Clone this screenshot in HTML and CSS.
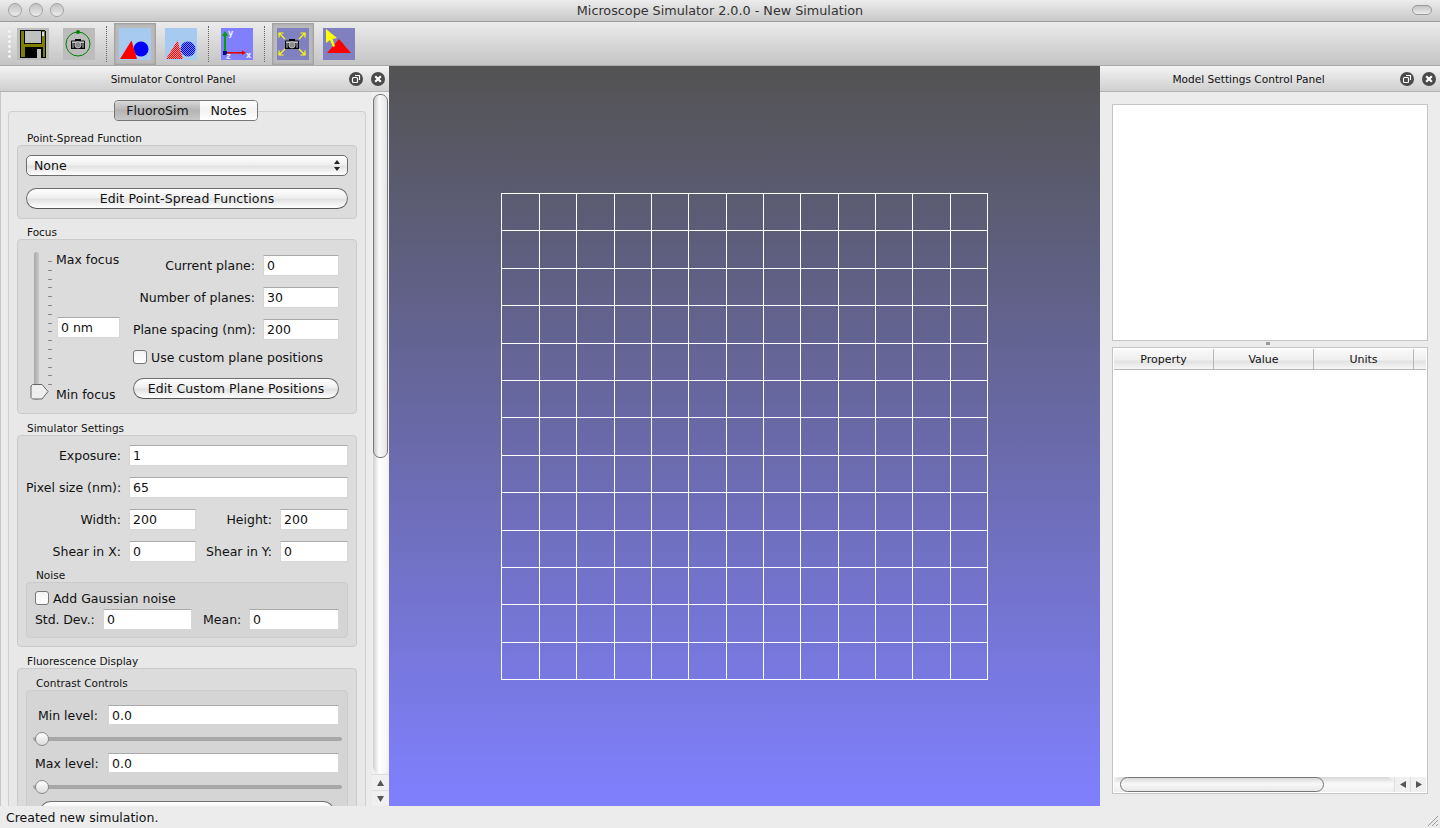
FILE: index.html
```html
<!DOCTYPE html>
<html lang="en">

<head>
    <meta charset="UTF-8">
    <title>Microscope Simulator 2.0.0 - New Simulation</title>
    <link rel="stylesheet" href="styles.css">
</head>

<body>
    <svg class="defs" width="0" height="0">
        <defs>
            <symbol id="camera" viewBox="0 0 14 10">
                <rect x="0" y="1.5" width="14" height="8.5" rx=".6" fill="#000"/>
                <rect x="4" y="0" width="6" height="2" fill="#000"/>
                <rect x="1" y="2.5" width="12" height="1.4" fill="#e4e4e4"/>
                <rect x="1" y="3.9" width="2" height="5" fill="#666"/>
                <rect x="11" y="3.9" width="2" height="5" fill="#666"/>
                <circle cx="7" cy="5.8" r="3.2" fill="#8c8c8c" stroke="#ddd" stroke-width=".7"/>
            </symbol>
        </defs>
    </svg>

    <div class="window">
        <div class="titlebar">
            <div class="lights">
                <span class="light"></span>
                <span class="light"></span>
                <span class="light"></span>
            </div>
            <div class="window-title">Microscope Simulator 2.0.0 - New Simulation</div>
            <span class="pill"></span>
        </div>

        <div class="toolbar">
            <div class="gripper"></div>

            <div class="tool tool-first">
                <svg width="32" height="32" viewBox="0 0 32 32" shape-rendering="crispEdges">
                    <rect width="32" height="32" fill="#bcbcbc"/>
                    <path d="M3 2H27L29 4V30H3Z" fill="#000"/>
                    <rect x="4" y="3" width="24" height="26" fill="#808000"/>
                    <rect x="7" y="3" width="18" height="13" fill="#000"/>
                    <rect x="8" y="3" width="16" height="12" fill="#c0c0c0"/>
                    <rect x="25" y="4" width="2" height="4" fill="#ddd"/>
                    <rect x="8" y="19" width="18" height="11" fill="#000"/>
                    <rect x="20" y="21" width="4" height="9" fill="#c0c0c0"/>
                </svg>
            </div>
            <div class="tool">
                <svg width="32" height="32" viewBox="0 0 32 32">
                    <rect width="32" height="32" fill="#bcbcbc"/>
                    <circle cx="15" cy="16" r="12" fill="none" stroke="#008000" stroke-width="1"/>
                    <circle cx="15" cy="4" r="2" fill="#008000"/>
                    <use href="#camera" x="8" y="11" width="14" height="10"/>
                </svg>
            </div>

            <div class="tool-sep tool-sep-a"></div>

            <div class="tool tool-on">
                <svg width="32" height="32" viewBox="0 0 32 32">
                    <rect width="32" height="32" fill="#a6caf0"/>
                    <circle cx="22" cy="21" r="7.5" fill="#00f"/>
                    <path d="M12.5 12.5L18 31H1Z" fill="#f00"/>
                </svg>
            </div>
            <div class="tool tool-plain">
                <svg width="32" height="32" viewBox="0 0 32 32">
                    <defs>
                        <clipPath id="clip-circle"><circle cx="23" cy="21" r="7.5"/></clipPath>
                        <clipPath id="clip-triangle"><path d="M12.5 12.5L18 31H1Z"/></clipPath>
                    </defs>
                    <rect width="32" height="32" fill="#a6caf0"/>
                    <circle cx="23" cy="21" r="7.5" fill="#7a90f0"/>
                    <g clip-path="url(#clip-circle)" stroke="#00f" stroke-width="1" stroke-dasharray="1 1" fill="none">
                        <path d="M0 13.5H32M0 15.5H32M0 17.5H32M0 19.5H32M0 21.5H32M0 23.5H32M0 25.5H32M0 27.5H32"/>
                        <path stroke-dashoffset="1" d="M0 14.5H32M0 16.5H32M0 18.5H32M0 20.5H32M0 22.5H32M0 24.5H32M0 26.5H32M0 28.5H32"/>
                    </g>
                    <path d="M12.5 12.5L18 31H1Z" fill="#f4a0a0"/>
                    <g clip-path="url(#clip-triangle)" stroke="#f00" stroke-width="1" stroke-dasharray="1 1" fill="none">
                        <path d="M0 12.5H32M0 14.5H32M0 16.5H32M0 18.5H32M0 20.5H32M0 22.5H32M0 24.5H32M0 26.5H32M0 28.5H32M0 30.5H32"/>
                        <path stroke-dashoffset="1" d="M0 13.5H32M0 15.5H32M0 17.5H32M0 19.5H32M0 21.5H32M0 23.5H32M0 25.5H32M0 27.5H32M0 29.5H32"/>
                    </g>
                </svg>
            </div>

            <div class="tool-sep tool-sep-b"></div>

            <div class="tool tool-plain">
                <svg width="32" height="32" viewBox="0 0 32 32">
                    <rect width="32" height="32" fill="#8080ff"/>
                    <rect x="3" y="6" width="2" height="19" fill="#00a000"/>
                    <path d="M4 3L7 8H1Z" fill="#00a000"/>
                    <rect x="5" y="24" width="18" height="1.6" fill="#e00000"/>
                    <path d="M25 24.8L21 22.6V27Z" fill="#e00000"/>
                    <rect x="2" y="23" width="4" height="4" fill="#000080"/>
                    <text x="7" y="8" class="axis-letter">y</text>
                    <text x="25" y="30" class="axis-letter">x</text>
                    <text x="5" y="31" class="axis-letter">z</text>
                </svg>
            </div>

            <div class="tool-sep tool-sep-c"></div>

            <div class="tool tool-on tool-on-b">
                <svg width="32" height="32" viewBox="0 0 32 32">
                    <rect width="32" height="32" fill="#8080c0"/>
                    <g stroke="#ff0" stroke-width="1.2" fill="none">
                        <path d="M2 5L8 11M2 9.5V5H6.5"/>
                        <path d="M28 5L22 11M28 9.5V5H23.5"/>
                        <path d="M2 27L8 21M2 22.5V27H6.5"/>
                        <path d="M28 27L22 21M28 22.5V27H23.5"/>
                    </g>
                    <use href="#camera" x="8" y="11" width="14" height="10"/>
                </svg>
            </div>
            <div class="tool tool-plain">
                <svg width="32" height="32" viewBox="0 0 32 32">
                    <rect width="32" height="32" fill="#8080c0"/>
                    <path d="M16 11L28 25H4Z" fill="#f00"/>
                    <path d="M3 1V15L7 12L10 19L12 18L9.5 11L14 10Z" fill="#ff0"/>
                </svg>
            </div>
        </div>

        <div class="main">
            <div class="side side-left">
                <div class="panel-head">
                    <span class="panel-title">Simulator Control Panel</span>
                    <span class="panel-btn">
                        <svg width="14" height="14" viewBox="0 0 14 14"><rect x="3.5" y="5.5" width="5" height="5" rx="1" fill="none" stroke="#fff" stroke-width="1.2"/><path d="M6 3.5H10.5V8" fill="none" stroke="#fff" stroke-width="1.2"/></svg>
                    </span>
                    <span class="panel-btn">
                        <svg width="14" height="14" viewBox="0 0 14 14"><path d="M4.2 4.2L9.8 9.8M9.8 4.2L4.2 9.8" stroke="#fff" stroke-width="2.2"/></svg>
                    </span>
                </div>
                <div class="left-body">
                    <div class="left-scroll">
                        <div class="tabs">
                            <span class="tab tab-active">FluoroSim</span>
                            <span class="tab">Notes</span>
                        </div>
                        <div class="tab-pane">

                            <div class="group-title">Point-Spread Function</div>
                            <div class="group group-psf">
                                <div class="select">
                                    <span>None</span>
                                    <svg width="8" height="13" viewBox="0 0 8 13"><path d="M4 1L7 5H1ZM4 12L1 8H7Z" fill="#222"/></svg>
                                </div>
                                <button class="btn">Edit Point-Spread Functions</button>
                            </div>

                            <div class="group-title">Focus</div>
                            <div class="group group-focus">
                                <div class="vslider">
                                    <div class="vtrack"></div>
                                    <div class="vticks"></div>
                                    <svg class="vthumb" width="20" height="18" viewBox="0 0 20 18"><path d="M2.5 1.5H12L18 8.5L12 16H2.5L1 14.5V3Z" fill="#eee" stroke="#666"/></svg>
                                </div>
                                <div class="focus-mid">
                                    <span>Max focus</span>
                                    <input class="field" type="text" value="0 nm">
                                    <span>Min focus</span>
                                </div>
                                <div class="focus-right">
                                    <div class="plane-grid">
                                        <label>Current plane:</label>
                                        <input class="field" type="text" value="0">
                                        <label>Number of planes:</label>
                                        <input class="field" type="text" value="30">
                                        <label class="tight">Plane spacing (nm):</label>
                                        <input class="field" type="text" value="200">
                                    </div>
                                    <div class="check-row">
                                        <span class="check"></span>
                                        <span>Use custom plane positions</span>
                                    </div>
                                    <button class="btn">Edit Custom Plane Positions</button>
                                </div>
                            </div>

                            <div class="group-title group-title-wide">Simulator Settings</div>
                            <div class="group group-sim">
                                <div class="sim-grid">
                                    <label>Exposure:</label>
                                    <input class="field span-3" type="text" value="1">
                                    <label>Pixel size (nm):</label>
                                    <input class="field span-3" type="text" value="65">
                                    <label>Width:</label>
                                    <input class="field" type="text" value="200">
                                    <label>Height:</label>
                                    <input class="field" type="text" value="200">
                                    <label>Shear in X:</label>
                                    <input class="field" type="text" value="0">
                                    <label>Shear in Y:</label>
                                    <input class="field" type="text" value="0">
                                </div>
                                <div class="group-title group-title-inner">Noise</div>
                                <div class="group group-noise">
                                    <div class="check-row check-row-noise">
                                        <span class="check"></span>
                                        <span>Add Gaussian noise</span>
                                    </div>
                                    <div class="noise-row">
                                        <label class="std-label">Std. Dev.:</label>
                                        <input class="field" type="text" value="0">
                                        <label class="mean-label">Mean:</label>
                                        <input class="field" type="text" value="0">
                                    </div>
                                </div>
                            </div>

                            <div class="group-title group-title-wide">Fluorescence Display</div>
                            <div class="group group-display">
                                <div class="group-title group-title-inner">Contrast Controls</div>
                                <div class="group group-contrast">
                                    <div class="level-row">
                                        <label>Min level:</label>
                                        <input class="field" type="text" value="0.0">
                                    </div>
                                    <div class="hslider"><span class="hthumb"></span></div>
                                    <div class="level-row">
                                        <label>Max level:</label>
                                        <input class="field" type="text" value="0.0">
                                    </div>
                                    <div class="hslider"><span class="hthumb"></span></div>
                                    <div class="btn btn-cut"></div>
                                </div>
                            </div>

                        </div>
                    </div>
                    <div class="vscroll">
                        <div class="vscroll-track">
                            <div class="vscroll-thumb"></div>
                        </div>
                        <div class="vscroll-arrow"><svg width="9" height="8" viewBox="0 0 9 8"><path d="M4.5 1L8 7H1Z" fill="#555"/></svg></div>
                        <div class="vscroll-arrow"><svg width="9" height="8" viewBox="0 0 9 8"><path d="M4.5 7L1 1H8Z" fill="#555"/></svg></div>
                    </div>
                </div>
            </div>

            <div class="viewport">
                <svg class="mesh" width="487" height="487" viewBox="0 0 487 487" shape-rendering="crispEdges">
                    <path stroke="#fff" stroke-width="1" fill="none" d="M.5 0V487M38.5 0V487M75.5 0V487M113.5 0V487M150.5 0V487M187.5 0V487M225.5 0V487M262.5 0V487M299.5 0V487M337.5 0V487M374.5 0V487M411.5 0V487M449.5 0V487M486.5 0V487M0 .5H487M0 37.5H487M0 75.5H487M0 112.5H487M0 150.5H487M0 187.5H487M0 224.5H487M0 262.5H487M0 299.5H487M0 337.5H487M0 374.5H487M0 411.5H487M0 449.5H487M0 486.5H487"/>
                </svg>
            </div>

            <div class="side side-right">
                <div class="panel-head">
                    <span class="panel-title">Model Settings Control Panel</span>
                    <span class="panel-btn">
                        <svg width="14" height="14" viewBox="0 0 14 14"><rect x="3.5" y="5.5" width="5" height="5" rx="1" fill="none" stroke="#fff" stroke-width="1.2"/><path d="M6 3.5H10.5V8" fill="none" stroke="#fff" stroke-width="1.2"/></svg>
                    </span>
                    <span class="panel-btn">
                        <svg width="14" height="14" viewBox="0 0 14 14"><path d="M4.2 4.2L9.8 9.8M9.8 4.2L4.2 9.8" stroke="#fff" stroke-width="2.2"/></svg>
                    </span>
                </div>
                <div class="right-body">
                    <div class="tree-box"></div>
                    <div class="splitter"><span class="splitter-grip"></span></div>
                    <div class="table-box">
                        <div class="table-head">
                            <span class="th">Property</span>
                            <span class="th">Value</span>
                            <span class="th">Units</span>
                            <span class="th th-rest"></span>
                        </div>
                        <div class="table-rows"></div>
                        <div class="hscroll">
                            <div class="hscroll-track"><div class="hscroll-thumb"></div></div>
                            <div class="hscroll-arrow"><svg width="8" height="9" viewBox="0 0 8 9"><path d="M1 4.5L7 1V8Z" fill="#555"/></svg></div>
                            <div class="hscroll-arrow"><svg width="8" height="9" viewBox="0 0 8 9"><path d="M7 4.5L1 8V1Z" fill="#555"/></svg></div>
                        </div>
                    </div>
                </div>
            </div>
        </div>

        <div class="statusbar">
            <span>Created new simulation.</span>
            <svg class="resizer" width="12" height="12" viewBox="0 0 12 12"><path d="M1 11L11 1M5 11L11 5M9 11L11 9" stroke="#999" stroke-width="1"/></svg>
        </div>
    </div>
</body>

</html>
```

FILE: styles.css
```css
* {
    box-sizing: border-box;
}

html,
body {
    margin: 0;
    height: 100%;
    overflow: hidden;
}

body {
    font-family: "DejaVu Sans", sans-serif;
    font-size: 12.5px;
    color: #111;
    background: #ececec;
}

.defs {
    display: block;
    height: 0;
}

.window {
    display: flex;
    flex-direction: column;
    width: 1440px;
    height: 828px;
}

/* Title bar */
.titlebar {
    display: flex;
    align-items: center;
    height: 22px;
    flex: none;
    padding: 0 8px 1px 8px;
    background: linear-gradient(#ececec, #c9c9c9);
    border-bottom: 1px solid #9c9c9c;
}

.lights {
    display: flex;
    gap: 7px;
    width: 62px;
}

.light {
    width: 14px;
    height: 14px;
    border-radius: 50%;
    border: 1px solid #a2a2a2;
    background: linear-gradient(#c2c2c2, #ececec);
}

.window-title {
    flex: 1;
    text-align: center;
    padding-right: 42px;
    font-size: 12.75px;
    color: #333;
}

.pill {
    width: 20px;
    height: 10px;
    border-radius: 5px;
    border: 1px solid #999;
    background: linear-gradient(#c4c4c4, #ececec);
}

/* Toolbar */
.toolbar {
    display: flex;
    align-items: center;
    height: 44px;
    flex: none;
    padding-left: 7px;
    background: linear-gradient(#ebebeb, #c4c4c4);
    border-bottom: 1px solid #aaa;
}

.gripper {
    width: 5px;
    height: 30px;
    background-image: radial-gradient(circle, #f4f4f4 1.2px, transparent 1.6px);
    background-size: 5px 5px;
}

.tool {
    display: flex;
    align-items: center;
    justify-content: center;
    width: 32px;
    height: 32px;
    flex: none;
}

.tool-first {
    margin-left: 5px;
    margin-right: 14px;
}

.tool-on {
    width: 42px;
    height: 42px;
    border: 1px solid #a3a3a3;
    background: #bababa;
    box-shadow: inset 0 0 2px #999;
}

.tool-plain {
    margin-left: 9px;
}

.tool-sep {
    width: 0;
    height: 36px;
    border-left: 1px dotted #666;
}

.tool-sep-a {
    margin: 0 7px 0 11px;
}

.tool-sep-b {
    margin: 0 12px 0 11px;
}

.tool-sep-b + .tool-plain {
    margin-left: 0;
}

.tool-sep-c {
    margin: 0 7px 0 11px;
}

.axis-letter {
    font-size: 8px;
    font-weight: bold;
    fill: #e8e8ff;
}

/* Main area */
.main {
    display: flex;
    flex: 1;
    min-height: 0;
}

.side {
    display: flex;
    flex-direction: column;
    flex: none;
    background: #ececec;
}

.side-left {
    width: 389px;
}

.side-right {
    width: 340px;
}

.panel-head {
    display: flex;
    align-items: center;
    gap: 8px;
    height: 26px;
    flex: none;
    padding: 0 4px 0 5px;
    background: linear-gradient(#f3f3f3, #cfcfcf);
    border-bottom: 1px solid #b4b4b4;
}

.panel-title {
    flex: 1;
    text-align: center;
    font-size: 10.6px;
    color: #111;
}

.panel-btn {
    display: flex;
    width: 14px;
    height: 14px;
    border-radius: 50%;
    background: #4a4a4a;
}

.left-body {
    display: flex;
    flex: 1;
    min-height: 0;
}

.left-scroll {
    width: 372px;
    flex: none;
    overflow: hidden;
    padding: 8px 6px 0 8px;
    box-shadow: inset 1px 0 #c8c8c8;
}

.tabs {
    position: relative;
    display: flex;
    width: 144px;
    height: 21px;
    margin-left: 106px;
    border: 1px solid #777;
    border-radius: 4px;
    overflow: hidden;
    font-size: 12.5px;
}

.tab {
    flex: 1;
    display: flex;
    align-items: center;
    justify-content: center;
    background: linear-gradient(#fdfdfd, #f2f2f2 50%, #ffffff);
}

.tab-active {
    flex: none;
    width: 85px;
    background: linear-gradient(#d8d8d8, #b4b4b4 50%, #c8c8c8);
}

.tab-pane {
    margin-top: -10px;
    padding: 19px 8px 0 8px;
    border: 1px solid #d0d0d0;
    border-bottom: 0;
    border-radius: 4px 4px 0 0;
    background: #e8e8e8;
}

.group-title {
    height: 14px;
    line-height: 14px;
    margin-top: 6px;
    padding-left: 10px;
    font-size: 10.5px;
    color: #111;
}

.tab-pane > .group-title:first-child {
    margin-top: 0;
}

.tab-pane > .group-title-wide {
    margin-top: 7px;
}

.group {
    border: 1px solid #cbcbcb;
    border-radius: 4px;
    background: #dcdcdc;
    padding: 9px 8px;
}

.group .group {
    background: #d5d5d5;
}

.group-title-inner {
    margin-top: 6px;
}

/* Controls */
.field {
    display: block;
    width: 100%;
    height: 21px;
    margin: 0;
    padding: 0 3px;
    border: 1px solid #d6d6d6;
    border-top-color: #aaa;
    border-radius: 0;
    outline: none;
    background: #fff;
    font: inherit;
    font-size: 12.5px;
    color: #111;
}

.btn {
    display: block;
    width: 100%;
    height: 21px;
    margin: 0;
    padding: 0;
    border: 1px solid #6e6e6e;
    border-bottom-color: #555;
    border-radius: 11px;
    background: linear-gradient(#ffffff, #efefef 45%, #e2e2e2 55%, #ffffff);
    font: inherit;
    letter-spacing: .12px;
    color: #111;
}

.select {
    display: flex;
    align-items: center;
    justify-content: space-between;
    height: 21px;
    padding: 0 6px 0 7px;
    border: 1px solid #6e6e6e;
    border-radius: 5px;
    background: linear-gradient(#ffffff, #efefef 45%, #e2e2e2 55%, #ffffff);
}

.group-psf .select {
    margin-bottom: 12px;
}

.check-row {
    display: flex;
    align-items: center;
    gap: 4px;
    height: 14px;
}

.check {
    flex: none;
    width: 14px;
    height: 14px;
    border: 1px solid #777;
    border-radius: 3px;
    background: linear-gradient(#f4f4f4, #ffffff);
}

/* Focus group */
.group-focus {
    display: flex;
    height: 175px;
    padding: 12px 8px 0 0;
}

.vslider {
    position: relative;
    display: flex;
    width: 38px;
    height: 148px;
    flex: none;
}

.vtrack {
    width: 5px;
    margin-left: 16px;
    height: 148px;
    border-radius: 3px;
    background: linear-gradient(90deg, #a9a9a9, #c9c9c9);
}

.vticks {
    width: 4px;
    height: 124px;
    margin: 9px 0 0 9px;
    background: repeating-linear-gradient(#888 0, #888 1px, transparent 1px, transparent 8.8px);
}

.vthumb {
    position: absolute;
    left: 12px;
    top: 131px;
}

.focus-mid {
    display: flex;
    flex-direction: column;
    justify-content: space-between;
    align-items: flex-start;
    width: 65px;
    height: 150px;
    flex: none;
}

.focus-mid .field {
    width: 63px;
    margin-left: 1px;
}

.focus-right {
    flex: none;
    width: 206px;
    margin: 3px 0 0 12px;
}

.plane-grid {
    display: grid;
    grid-template-columns: 122px 76px;
    column-gap: 8px;
    row-gap: 11px;
    align-items: center;
}

.plane-grid label,
.sim-grid label {
    text-align: right;
    white-space: nowrap;
}

.tight {
    letter-spacing: -.1px;
}

.focus-right .check-row {
    margin: 10px 0 14px 0;
}

/* Simulator settings */
.group-sim {
    padding-bottom: 8px;
}

.sim-grid {
    display: grid;
    grid-template-columns: 95px 67px 68px 68px;
    column-gap: 8px;
    row-gap: 11px;
    align-items: center;
}

.span-3 {
    grid-column: span 3;
}

.group-noise {
    height: 56px;
    padding: 8px 8px 0 8px;
}

.check-row-noise {
    height: 14px;
    margin-bottom: 4px;
}

.noise-row {
    display: flex;
    align-items: center;
}

.noise-row label {
    flex: none;
    white-space: nowrap;
}

.std-label {
    width: 60px;
    letter-spacing: -.1px;
}

.mean-label {
    width: 36px;
    margin-left: 11px;
}

.noise-row .field:nth-child(2) {
    width: 89px;
    margin-left: 8px;
}

.noise-row .field:nth-child(4) {
    width: 90px;
    margin-left: 10px;
}

/* Contrast */
.group-display {
    padding-top: 7px;
    height: 160px;
}

.group-display .group-title-inner {
    margin-top: 0;
}

.group-contrast {
    height: 140px;
    padding-top: 14px;
}

.level-row {
    display: grid;
    grid-template-columns: 63px 1fr;
    column-gap: 10px;
    align-items: center;
}

.level-row label {
    text-align: right;
    white-space: nowrap;
}

.level-row .field {
    height: 20px;
}

.hslider {
    position: relative;
    height: 4px;
    margin: 12px -3px 12px -2px;
    border-radius: 2px;
    background: #a8a8a8;
}

.hthumb {
    position: absolute;
    left: 2px;
    top: -5px;
    width: 14px;
    height: 14px;
    border-radius: 50%;
    border: 1px solid #888;
    background: linear-gradient(#fff, #ddd);
}

.btn-cut {
    width: 294px;
    margin: 1px 0 0 5px;
}

/* Left scrollbar */
.vscroll {
    display: flex;
    flex-direction: column;
    width: 17px;
    flex: none;
    padding-top: 2px;
    background: #f0f0f0;
}

.vscroll-track {
    flex: 1;
    width: 15px;
    margin-left: 1px;
    border-radius: 7px 7px 8px 8px;
    background: linear-gradient(90deg, #cfcfcf, #ffffff 40%, #f4f4f4);
}

.vscroll-thumb {
    height: 364px;
    border: 1px solid #777;
    border-radius: 7px;
    background: linear-gradient(90deg, #c9c9c9, #fafafa 40%, #e4e4e4);
}

.vscroll-arrow {
    display: flex;
    align-items: center;
    justify-content: center;
    height: 16px;
    flex: none;
    border-top: 1px solid #ddd;
}

/* Viewport */
.viewport {
    flex: 1;
    display: flex;
    align-items: center;
    justify-content: center;
    background: linear-gradient(#535353, #8080ff);
}

.mesh {
    display: block;
}

/* Right panel */
.right-body {
    display: flex;
    flex-direction: column;
    flex: 1;
    min-height: 0;
    padding: 12px 12px 12px 12px;
}

.tree-box {
    height: 237px;
    flex: none;
    border: 1px solid #c4c4c4;
    background: #fff;
}

.splitter {
    display: flex;
    justify-content: center;
    height: 6px;
    flex: none;
    padding-right: 4px;
}

.splitter-grip {
    width: 4px;
    height: 3px;
    margin-top: 1px;
    background: #999;
}

.table-box {
    display: flex;
    flex-direction: column;
    flex: 1;
    min-height: 0;
    border: 1px solid #c4c4c4;
    padding: 1px;
    background: #fff;
}

.table-head {
    display: flex;
    height: 21px;
    flex: none;
    border-bottom: 1px solid #b8b8b8;
    background: linear-gradient(#fafafa, #efefef 55%, #e2e2e2 60%, #f6f6f6);
}

.th {
    display: flex;
    align-items: center;
    justify-content: center;
    width: 100px;
    flex: none;
    border-right: 1px solid #b8b8b8;
    font-size: 11px;
}

.th-rest {
    flex: 1;
    border-right: 0;
}

.table-rows {
    flex: 1;
}

.hscroll {
    display: flex;
    align-items: center;
    height: 15px;
    flex: none;
    background: #f0f0f0;
}

.hscroll-track {
    display: flex;
    flex: 1;
    height: 15px;
    padding-left: 6px;
    border-radius: 8px;
    background: linear-gradient(#d6d6d6, #fafafa 45%, #f0f0f0);
}

.hscroll-thumb {
    width: 204px;
    height: 15px;
    border: 1px solid #777;
    border-radius: 8px;
    background: linear-gradient(#d8d8d8, #f8f8f8 45%, #e8e8e8);
}

.hscroll-arrow {
    display: flex;
    align-items: center;
    justify-content: center;
    width: 16px;
    height: 15px;
    flex: none;
    border-left: 1px solid #ddd;
}

/* Status bar */
.statusbar {
    display: flex;
    align-items: center;
    justify-content: space-between;
    height: 22px;
    flex: none;
    padding-left: 6px;
    background: #ececec;
    font-size: 12.5px;
}

.resizer {
    align-self: flex-end;
    margin: 0 1px 1px 0;
}
```
